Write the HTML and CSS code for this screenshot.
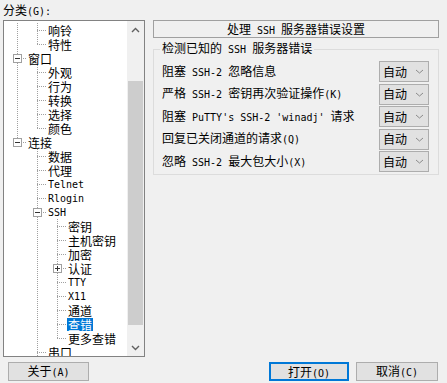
FILE: index.html
```html
<!DOCTYPE html>
<html lang="zh-CN">
<head>
  <meta charset="UTF-8">
  <title>PuTTY 配置</title>
  <link rel="stylesheet" href="styles.css">
</head>
<body>
  <div class="dlg">
    <div class="main">
      <div class="side">
        <div class="cap">分类<span class="en">(G):</span></div>
        <div class="tree">
          <div class="rows">
            <div class="row"><i class="c v"></i><i class="c t"></i><span class="lbl">响铃</span></div>
            <div class="row"><i class="c v"></i><i class="c l"></i><span class="lbl">特性</span></div>
            <div class="row"><i class="c t"><b class="box"></b></i><span class="lbl">窗口</span></div>
            <div class="row"><i class="c v"></i><i class="c t"></i><span class="lbl">外观</span></div>
            <div class="row"><i class="c v"></i><i class="c t"></i><span class="lbl">行为</span></div>
            <div class="row"><i class="c v"></i><i class="c t"></i><span class="lbl">转换</span></div>
            <div class="row"><i class="c v"></i><i class="c t"></i><span class="lbl">选择</span></div>
            <div class="row"><i class="c v"></i><i class="c l"></i><span class="lbl">颜色</span></div>
            <div class="row"><i class="c l"><b class="box"></b></i><span class="lbl">连接</span></div>
            <div class="row"><i class="c"></i><i class="c t"></i><span class="lbl">数据</span></div>
            <div class="row"><i class="c"></i><i class="c t"></i><span class="lbl">代理</span></div>
            <div class="row"><i class="c"></i><i class="c t"></i><span class="lbl en">Telnet</span></div>
            <div class="row"><i class="c"></i><i class="c t"></i><span class="lbl en">Rlogin</span></div>
            <div class="row"><i class="c"></i><i class="c t"><b class="box"></b></i><span class="lbl en">SSH</span></div>
            <div class="row"><i class="c"></i><i class="c v"></i><i class="c t"></i><span class="lbl">密钥</span></div>
            <div class="row"><i class="c"></i><i class="c v"></i><i class="c t"></i><span class="lbl">主机密钥</span></div>
            <div class="row"><i class="c"></i><i class="c v"></i><i class="c t"></i><span class="lbl">加密</span></div>
            <div class="row"><i class="c"></i><i class="c v"></i><i class="c t"><b class="box plus"></b></i><span class="lbl">认证</span></div>
            <div class="row"><i class="c"></i><i class="c v"></i><i class="c t"></i><span class="lbl en">TTY</span></div>
            <div class="row"><i class="c"></i><i class="c v"></i><i class="c t"></i><span class="lbl en">X11</span></div>
            <div class="row"><i class="c"></i><i class="c v"></i><i class="c t"></i><span class="lbl">通道</span></div>
            <div class="row"><i class="c"></i><i class="c v"></i><i class="c t"></i><span class="lbl sel">查错</span></div>
            <div class="row"><i class="c"></i><i class="c v"></i><i class="c l"></i><span class="lbl">更多查错</span></div>
            <div class="row"><i class="c"></i><i class="c t"></i><span class="lbl">串口</span></div>
          </div>
          <div class="sbar">
            <div class="arr"><svg width="9" height="6" viewBox="0 0 9 6"><path d="M1 5 4.5 1.5 8 5" fill="none" stroke="#606060" stroke-width="1.4"/></svg></div>
            <div class="track"><div class="thumb"></div></div>
            <div class="arr"><svg width="9" height="6" viewBox="0 0 9 6"><path d="M1 1 4.5 4.5 8 1" fill="none" stroke="#606060" stroke-width="1.4"/></svg></div>
          </div>
        </div>
      </div>

      <div class="panel">
        <div class="head">处理<span class="en"> SSH </span>服务器错误设置</div>
        <fieldset class="grp">
          <legend>检测已知的<span class="en"> SSH </span>服务器错误</legend>
          <div class="opts">
            <div class="opt"><span>阻塞<span class="en"> SSH-2 </span>忽略信息</span><div class="combo">自动<svg width="9" height="5" viewBox="0 0 9 5"><path d="M1 1 4.5 4 8 1" fill="none" stroke="#8a8a8a"/></svg></div></div>
            <div class="opt"><span>严格<span class="en"> SSH-2 </span>密钥再次验证操作<span class="en">(K)</span></span><div class="combo">自动<svg width="9" height="5" viewBox="0 0 9 5"><path d="M1 1 4.5 4 8 1" fill="none" stroke="#8a8a8a"/></svg></div></div>
            <div class="opt"><span>阻塞<span class="en"> PuTTY's SSH-2 'winadj' </span>请求</span><div class="combo">自动<svg width="9" height="5" viewBox="0 0 9 5"><path d="M1 1 4.5 4 8 1" fill="none" stroke="#8a8a8a"/></svg></div></div>
            <div class="opt"><span>回复已关闭通道的请求<span class="en">(Q)</span></span><div class="combo">自动<svg width="9" height="5" viewBox="0 0 9 5"><path d="M1 1 4.5 4 8 1" fill="none" stroke="#8a8a8a"/></svg></div></div>
            <div class="opt"><span>忽略<span class="en"> SSH-2 </span>最大包大小<span class="en">(X)</span></span><div class="combo">自动<svg width="9" height="5" viewBox="0 0 9 5"><path d="M1 1 4.5 4 8 1" fill="none" stroke="#8a8a8a"/></svg></div></div>
          </div>
        </fieldset>
      </div>
    </div>

    <div class="foot">
      <button class="btn about">关于<span class="en">(A)</span></button>
      <button class="btn open">打开<span class="en">(O)</span></button>
      <button class="btn cancel">取消<span class="en">(C)</span></button>
    </div>
  </div>
</body>
</html>
```

FILE: styles.css
```css
* {
  box-sizing: border-box;
}
body {
  margin: 0;
  width: 447px;
  height: 383px;
  overflow: hidden;
  background: #f0f0f0;
  color: #000;
  font: 12px/14px "Noto Sans CJK SC", sans-serif;
}
.en {
  font-family: "DejaVu Sans Mono", monospace;
  font-size: 10px;
}
.dlg {
  display: flex;
  flex-direction: column;
}
.main {
  display: flex;
  gap: 8px;
}

/* category tree */
.side {
  width: 145px;
  padding: 2px 0 0 3px;
}
.cap {
  height: 16px;
  line-height: 16px;
  margin-bottom: 2px;
}
.tree {
  height: 337px;
  border: 1px solid #828282;
  background: #fff;
  display: flex;
  overflow: hidden;
}
.rows {
  flex: 1;
  padding: 2px 0 0 3px;
}
.row {
  display: flex;
  align-items: center;
  height: 14px;
  white-space: nowrap;
}
.c {
  --dv: repeating-linear-gradient(to bottom, #a0a0a0 0 1px, transparent 1px 2px);
  --dh: repeating-linear-gradient(to right, #a0a0a0 0 1px, transparent 1px 2px);
  flex: none;
  width: 20px;
  height: 14px;
  display: flex;
  align-items: center;
  background-repeat: no-repeat;
}
.v {
  background-image: var(--dv);
  background-size: 1px 14px;
  background-position: 10px 0;
}
.t {
  background-image: var(--dv), var(--dh);
  background-size: 1px 14px, 10px 1px;
  background-position: 10px 0, 10px 7px;
}
.l {
  background-image: var(--dv), var(--dh);
  background-size: 1px 8px, 10px 1px;
  background-position: 10px 0, 10px 7px;
}
.box {
  width: 9px;
  height: 9px;
  margin-left: 6px;
  border: 1px solid #a0a0a0;
  background: linear-gradient(#333, #333) center / 5px 1px no-repeat, #fff;
}
.box.plus {
  background: linear-gradient(#333, #333) center / 5px 1px no-repeat,
    linear-gradient(#333, #333) center / 1px 5px no-repeat, #fff;
}
.lbl {
  padding: 0 1px;
  line-height: 13px;
}
.lbl.en {
  font-size: 10px;
}
.sel {
  background: #0078d7;
  color: #fff;
}
.sbar {
  flex: none;
  width: 17px;
  background: #f0f0f0;
  display: flex;
  flex-direction: column;
}
.arr {
  height: 17px;
  display: flex;
  align-items: center;
  justify-content: center;
}
.track {
  flex: 1;
}
.thumb {
  margin: 43px 1px 0;
  height: 244px;
  background: #cdcdcd;
}

/* settings panel */
.panel {
  width: 286px;
  padding-top: 20px;
}
.head {
  height: 18px;
  border: 1px solid #a0a0a0;
  text-align: center;
  line-height: 16px;
}
.grp {
  margin: 3px 0 0;
  padding: 4px 9px 2px 6px;
  border: 1px solid #dcdcdc;
  min-width: 0;
}
.grp legend {
  padding: 0 2px;
  line-height: 14px;
}
.opts {
  display: grid;
  grid-auto-rows: 21px;
  row-gap: 1.5px;
}
.opt {
  display: flex;
  align-items: center;
  justify-content: space-between;
  padding-left: 2px;
  white-space: nowrap;
}
.combo {
  width: 50px;
  height: 21px;
  border: 1px solid #adadad;
  background: #e1e1e1;
  display: flex;
  align-items: center;
  padding-left: 3px;
}
.combo svg {
  margin-left: 8px;
}

/* buttons */
.foot {
  display: flex;
  margin-top: 5px;
  padding: 0 9px 0 8px;
}
.btn {
  height: 19px;
  padding: 0;
  border: 1px solid #adadad;
  background: #e1e1e1;
  color: #000;
  font: inherit;
  line-height: 16px;
}
.about {
  width: 81px;
}
.open {
  width: 80px;
  margin-left: auto;
  border: 2px solid #0078d7;
}
.cancel {
  width: 82px;
  margin-left: 7px;
}
```
